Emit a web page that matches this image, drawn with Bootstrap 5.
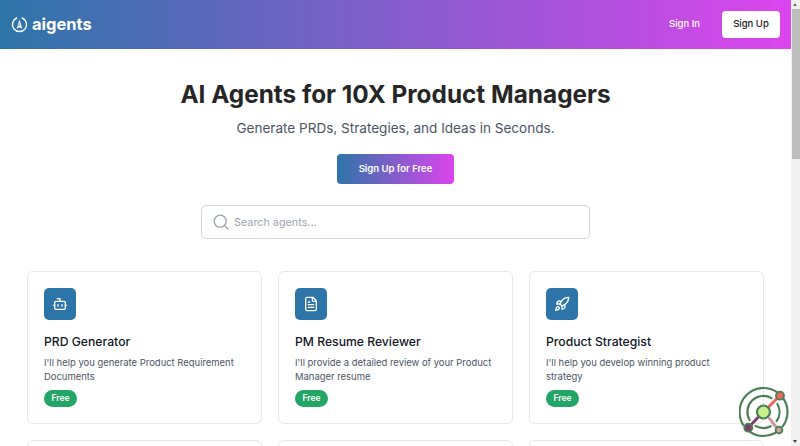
<!DOCTYPE html>
<html lang="en">

<head>
    <meta charset="UTF-8" />
    <meta name="viewport" content="width=device-width, initial-scale=1.0" />
    <title>aigents</title>
    <link rel="stylesheet" href="https://cdn.jsdelivr.net/npm/bootstrap@5.3.3/dist/css/bootstrap.min.css" />
    <style>
        body { font-family: Inter, "Liberation Sans", sans-serif; color: #222; background: #fff; padding-right: 9px; }
        .top-bar { height: 49px; padding: 0 11px; background: linear-gradient(90deg, #2d75a9, #dc45ee); }
        .brand-name { font-size: 16.5px; font-weight: 700; color: #fff; text-decoration: none; line-height: 1; }
        .sign-group { gap: 22px; }
        .sign-link { font-size: 9.5px; font-weight: 500; color: #fff; text-decoration: none; }
        .sign-btn { width: 58px; height: 27px; font-size: 9.5px; font-weight: 500; color: #222; background: #fff; border: 0; border-radius: 4px; padding: 0; }
        .sign-btn:hover { background: #fff; color: #222; }
        .hero-title { font-size: 24.35px; font-weight: 700; color: #262626; line-height: 30px; margin: 0; padding-top: 30px; }
        .hero-sub { font-size: 13.55px; color: #4b5563; line-height: 20px; margin: 9px 0 0; }
        .cta-btn { width: 117px; height: 30px; margin-top: 16px; padding: 0; font-size: 9.5px; font-weight: 600; color: #fff; border: 0; border-radius: 4px; background: linear-gradient(90deg, #2d75a9, #dc45ee); }
        .cta-btn:hover { color: #fff; background: linear-gradient(90deg, #2d75a9, #dc45ee); }
        .search-box { width: 389px; height: 34px; margin: 21px auto 0; padding: 0 11px; gap: 5px; border: 1px solid #d1d5db; border-radius: 5px; }
        .search-box input { border: 0; outline: 0; padding: 2px 0 0; font-size: 10.8px; width: 100%; color: #222; background: transparent; }
        .search-box input::placeholder { color: #9ca3af; opacity: 1; }
        .agent-grid { display: grid; grid-template-columns: repeat(3, 235px); gap: 16px; padding: 32px 27px 20px; }
        .agent-card { height: 153px; padding: 16px; border: 1px solid #e5e7eb; border-radius: 6px; }
        .agent-icon { width: 32px; height: 32px; border-radius: 5px; background: #2d75a9; }
        .agent-name { font-size: 12.2px; font-weight: 500; color: #111827; line-height: 16px; margin: 14px 0 0; }
        .agent-text { font-size: 9.45px; color: #4b5563; line-height: 13.5px; margin: 6px 0 0; }
        .free-tag { display: inline-block; width: 33px; height: 17px; margin-top: 6px; font-size: 8.5px; font-weight: 600; line-height: 16px; text-align: center; color: #fff; background: #22a565; border-radius: 9px; }
        .orbit-logo { position: fixed; left: 739px; top: 386px; width: 52px; height: 52px; }
        .fake-scroll { position: fixed; top: 0; right: 0; bottom: 0; width: 9px; background: #f1f1f1; }
        .fake-thumb { position: absolute; top: 9px; left: 1px; right: 0; height: 150px; background: #bdbdbd; }
        .fake-arrow { position: absolute; left: 2px; width: 0; height: 0; border-left: 2.5px solid transparent; border-right: 2.5px solid transparent; }
        .fake-arrow-up { top: 3px; border-bottom: 3px solid #777; }
        .fake-arrow-down { bottom: 3px; border-top: 3px solid #444; }
    </style>
</head>

<body>
    <nav class="top-bar d-flex align-items-center justify-content-between">
        <a href="#" class="d-flex align-items-center gap-1 brand-name">
            <svg width="17" height="17" viewBox="0 0 24 24" fill="none" stroke="#fff" stroke-width="2">
                <path d="M8 2.8A10 10 0 1 0 16 2.8" stroke-linecap="round" />
                <path d="M12 5 8 18l4-2 4 2z" fill="#fff" stroke="none" />
                <path d="M12 8.5 10.4 14.6 12 14z" fill="#2d75a9" stroke="none" />
            </svg>
            aigents
        </a>
        <div class="d-flex align-items-center sign-group">
            <a href="#" class="sign-link">Sign In</a>
            <button class="btn sign-btn" type="button">Sign Up</button>
        </div>
    </nav>

    <main class="text-center">
        <h1 class="hero-title">AI Agents for 10X Product Managers</h1>
        <p class="hero-sub">Generate PRDs, Strategies, and Ideas in Seconds.</p>
        <button class="btn cta-btn" type="button">Sign Up for Free</button>

        <div class="search-box d-flex align-items-center">
            <svg class="flex-shrink-0" width="16" height="16" viewBox="0 0 16 16" fill="none" stroke="#9ca3af" stroke-width="1.3">
                <circle cx="7.2" cy="7.2" r="6" />
                <path d="m11.6 11.6 3.4 3.4" stroke-linecap="round" />
            </svg>
            <input type="text" placeholder="Search agents..." />
        </div>

        <div class="agent-grid text-start">
            <div class="agent-card">
                <div class="agent-icon d-flex align-items-center justify-content-center">
                    <svg width="16" height="16" viewBox="0 0 24 24" fill="none" stroke="#fff" stroke-width="2" stroke-linecap="round" stroke-linejoin="round">
                        <path d="M12 8V4H8" />
                        <rect x="4" y="8" width="16" height="12" rx="2" />
                        <path d="M2 14h2M20 14h2M15 13v2M9 13v2" />
                    </svg>
                </div>
                <h5 class="agent-name">PRD Generator</h5>
                <p class="agent-text">I'll help you generate Product Requirement Documents</p>
                <span class="free-tag">Free</span>
            </div>
            <div class="agent-card">
                <div class="agent-icon d-flex align-items-center justify-content-center">
                    <svg width="16" height="16" viewBox="0 0 24 24" fill="none" stroke="#fff" stroke-width="2" stroke-linecap="round" stroke-linejoin="round">
                        <path d="M15 2H6a2 2 0 0 0-2 2v16a2 2 0 0 0 2 2h12a2 2 0 0 0 2-2V7z" />
                        <path d="M14 2v4a2 2 0 0 0 2 2h4M10 9H8M16 13H8M16 17H8" />
                    </svg>
                </div>
                <h5 class="agent-name">PM Resume Reviewer</h5>
                <p class="agent-text">I'll provide a detailed review of your Product Manager resume</p>
                <span class="free-tag">Free</span>
            </div>
            <div class="agent-card">
                <div class="agent-icon d-flex align-items-center justify-content-center">
                    <svg width="16" height="16" viewBox="0 0 24 24" fill="none" stroke="#fff" stroke-width="2" stroke-linecap="round" stroke-linejoin="round">
                        <path d="M4.5 16.5c-1.5 1.26-2 5-2 5s3.74-.5 5-2c.71-.84.7-2.13-.09-2.91a2.18 2.18 0 0 0-2.91-.09z" />
                        <path d="m12 15-3-3a22 22 0 0 1 2-3.95A12.88 12.88 0 0 1 22 2c0 2.72-.78 7.5-6 11a22.35 22.35 0 0 1-4 2z" />
                        <path d="M9 12H4s.55-3.03 2-4c1.62-1.08 5 0 5 0M12 15v5s3.03-.55 4-2c1.08-1.62 0-5 0-5" />
                    </svg>
                </div>
                <h5 class="agent-name">Product Strategist</h5>
                <p class="agent-text">I'll help you develop winning product strategy</p>
                <span class="free-tag">Free</span>
            </div>
            <div class="agent-card"></div>
            <div class="agent-card"></div>
            <div class="agent-card"></div>
        </div>
    </main>

    <svg class="orbit-logo" viewBox="0 0 52 52" fill="none" stroke="#4c8054" stroke-width="2.2" stroke-linecap="round">
        <path d="M44.6 12.9A24 24 0 0 1 43.7 40.4M36.1 47A24 24 0 0 1 11.4 46.1M4.4 39.1A24 24 0 0 1 37.6 5.9" />
        <path d="M38.4 18A16 16 0 0 1 37.6 35.2M31.8 40.3A16 16 0 0 1 16.5 39.9M10.6 34A16 16 0 0 1 32.5 12.1" />
        <path d="M30 20.5 38 12.5" stroke="#f0655f" stroke-width="3" />
        <path d="M19 31.5 12 38.7" stroke="#7a3f6d" stroke-width="3" />
        <path d="M30.5 32.5 37 41" stroke="#cc9c9c" stroke-width="3" />
        <circle cx="24.5" cy="26" r="6.5" fill="#c9ef8c" />
        <circle cx="41" cy="9.7" r="4" fill="#f0655f" stroke-width="1.8" />
        <circle cx="9.3" cy="41.7" r="4" fill="#7a3f6d" stroke-width="1.8" />
        <circle cx="40" cy="44" r="3.4" fill="#cfa5a0" stroke-width="1.8" />
    </svg>

    <div class="fake-scroll">
        <span class="fake-arrow fake-arrow-up"></span>
        <div class="fake-thumb"></div>
        <span class="fake-arrow fake-arrow-down"></span>
    </div>

    <script src="https://cdn.jsdelivr.net/npm/bootstrap@5.3.3/dist/js/bootstrap.bundle.min.js"></script>
</body>

</html>
